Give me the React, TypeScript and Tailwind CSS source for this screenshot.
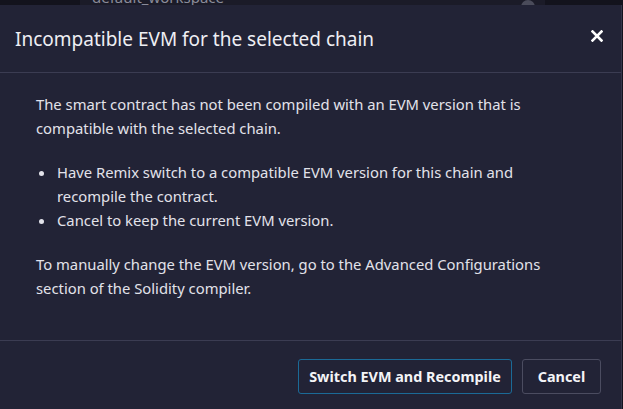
import React from "react";

export default function App() {
  return (
    <div
      className="w-[623px] h-[409px] bg-[#13131d] overflow-hidden flex flex-col"
      style={{ fontFamily: '"Noto Sans", "Open Sans", sans-serif' }}
    >
      {/* page behind the modal */}
      <div className="h-[5px] flex shrink-0">
        <div className="ml-[80px] w-[465px] h-[20px] -mt-[15px] bg-[#1b1b28] flex items-end justify-between pl-[12px] pr-[10px] text-[15px] text-[#8a8b99]">
          <span className="leading-none">default_workspace</span>
          <span className="w-[14px] h-[14px] rounded-full bg-[#4a4b5a] mb-[-9px]" />
        </div>
      </div>

      {/* modal */}
      <div className="w-[622px] flex-1 bg-[#222336] border-r border-[#34354a] flex flex-col text-[#e2e2ea]">
        <div className="h-[68px] shrink-0 border-b border-[#3b3c52] flex items-center justify-between pl-[15px] pr-[18px]">
          <h5 className="text-[19px] leading-none text-[#eeeef3] mt-[1px]">
            Incompatible EVM for the selected chain
          </h5>
          <button className="text-white -mt-[5px]">
            <svg width="12" height="12" viewBox="0 0 12 12">
              <path d="M1.5 1.5 L10.5 10.5 M10.5 1.5 L1.5 10.5" stroke="currentColor" strokeWidth="2.6" strokeLinecap="square" />
            </svg>
          </button>
        </div>

        <div className="flex-1 pl-[36px] pr-[30px] pt-[19px] text-[14.8px] leading-[24px]">
          <p>
            The smart contract has not been compiled with an EVM version that is
            <br />
            compatible with the selected chain.
          </p>
          <ul className="mt-[20px] ml-[20px] list-disc">
            <li className="pl-[1px]">
              Have Remix switch to a compatible EVM version for this chain and
              <br />
              recompile the contract.
            </li>
            <li className="pl-[1px]">Cancel to keep the current EVM version.</li>
          </ul>
          <p className="mt-[20px]">
            To manually change the EVM version, go to the Advanced Configurations
            <br />
            section of the Solidity compiler.
          </p>
        </div>

        <div className="h-[69px] shrink-0 border-t border-[#3b3c52] flex items-start justify-end gap-[10px] pt-[18px] pr-[20px]">
          <button className="h-[35px] w-[214px] border border-[#1b6a97] rounded-[3px] text-[14.4px] font-bold text-[#f4f4f7]">
            Switch EVM and Recompile
          </button>
          <button className="h-[35px] w-[79px] border border-[#4b4c60] rounded-[3px] text-[14.4px] font-bold text-[#f4f4f7]">
            Cancel
          </button>
        </div>
      </div>
    </div>
  );
}
